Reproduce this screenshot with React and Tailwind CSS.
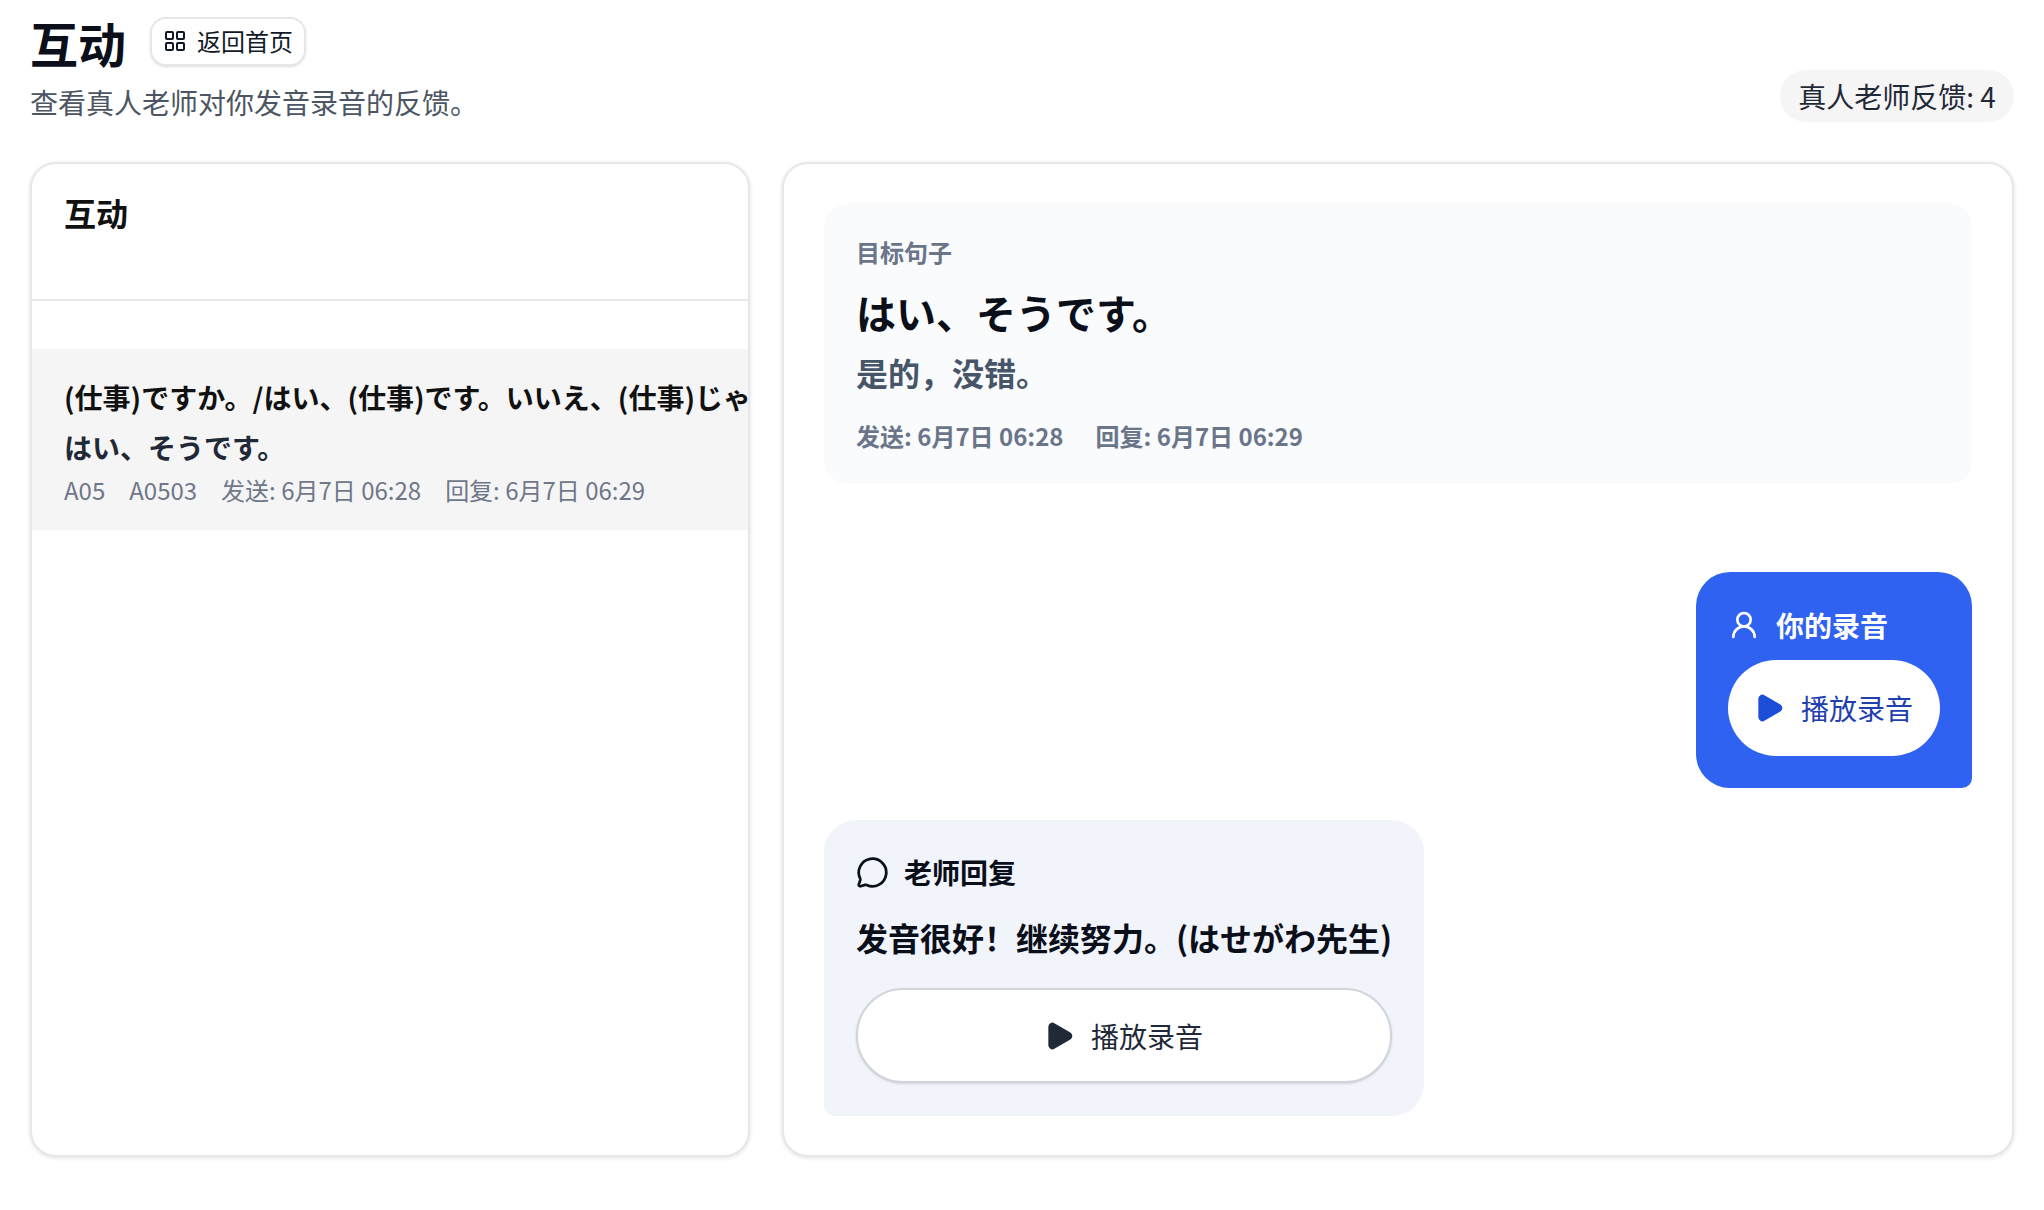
import { LayoutGrid, MessageCircle, Play, UserRound } from "lucide-react";

const fontStack = { fontFamily: '"Noto Sans CJK SC", sans-serif' };

const App = () => {
  return (
    <div
      className="w-full h-[1210px] overflow-hidden bg-white px-[30px] pt-[12px] text-[#111827]"
      style={fontStack}
    >
      <header className="flex justify-between items-end">
        <div>
          <div className="flex items-center gap-[24px] h-[60px]">
            <h1 className="text-[48px] leading-[60px] font-bold text-[#0b0f1a]">互动</h1>
            <button className="h-[49px] w-[156px] -mt-[2px] flex items-center justify-center gap-[10px] rounded-2xl border-2 border-[#e5e7eb] bg-white text-[24px] leading-none text-[#111827] shadow-sm">
              <LayoutGrid size={24} strokeWidth={2} />
              <span>返回首页</span>
            </button>
          </div>
          <p className="mt-[10px] text-[28px] leading-[40px] text-[#4b5563]">
            查看真人老师对你发音录音的反馈。
          </p>
        </div>
        <div className="h-[52px] w-[234px] flex items-center justify-center rounded-full bg-[#f5f5f5] text-[28px] leading-none text-[#1f2937]">
          真人老师反馈: 4
        </div>
      </header>

      <main className="mt-[40px] flex gap-[32px] h-[995px]">
        <section className="w-[720px] shrink-0 flex flex-col overflow-hidden rounded-[26px] border-2 border-[#e5e7eb] bg-white shadow-[0_1px_4px_rgba(0,0,0,0.12)]">
          <div className="h-[137px] shrink-0 border-b-2 border-[#e5e7eb] px-[32px] pt-[24px]">
            <h2 className="text-[32px] leading-[48px] font-bold text-[#111111]">互动</h2>
          </div>
          <div className="pt-[48px]">
            <div className="h-[181px] bg-[#f5f5f5] pl-[32px] pt-[23px] overflow-hidden">
              <p className="whitespace-nowrap text-[28px] leading-[50px] font-bold text-[#111111]">
                (仕事)ですか。/はい、(仕事)です。いいえ、(仕事)じゃ
              </p>
              <p className="text-[28px] leading-[50px] font-bold text-[#1f2937]">はい、そうです。</p>
              <div className="mt-[1px] flex gap-[24px] text-[24px] leading-[34px] text-[#6f778a]">
                <span>A05</span>
                <span>A0503</span>
                <span>发送: 6月7日 06:28</span>
                <span>回复: 6月7日 06:29</span>
              </div>
            </div>
          </div>
        </section>

        <section className="flex-1 flex flex-col rounded-[26px] border-2 border-[#e5e7eb] bg-white shadow-[0_1px_4px_rgba(0,0,0,0.12)] px-[40px] pt-[39px]">
          <div className="h-[281px] rounded-[24px] bg-[#f9fbfd] px-[32px] pt-[31px]">
            <div className="text-[24px] leading-[36px] font-semibold text-[#6b7589]">目标句子</div>
            <div className="mt-[14px] text-[40px] leading-[56px] font-bold text-[#0b0f1a]">はい、そうです。</div>
            <div className="mt-[10px] text-[32px] leading-[44px] font-semibold text-[#475569]">是的，没错。</div>
            <div className="mt-[24px] flex gap-[32px] text-[24px] leading-[36px] font-semibold text-[#6b7589]">
              <span>发送: 6月7日 06:28</span>
              <span>回复: 6月7日 06:29</span>
            </div>
          </div>

          <div className="mt-[88px] self-end w-[276px] rounded-[34px] rounded-br-[10px] bg-[#2f62f0] px-[32px] pt-[33px] pb-[32px] text-white">
            <div className="flex items-center gap-[16px] h-[40px] text-[28px] leading-[40px] font-bold">
              <UserRound size={32} strokeWidth={2} />
              <span>你的录音</span>
            </div>
            <button className="mt-[15px] h-[96px] w-[212px] flex items-center justify-center gap-[16px] rounded-full bg-white text-[28px] leading-none text-[#1e40af]">
              <Play size={32} strokeWidth={2} className="fill-[#1d4ed8] text-[#1d4ed8] -ml-[2px]" />
              <span>播放录音</span>
            </button>
          </div>

          <div className="mt-[32px] self-start w-[600px] rounded-[32px] rounded-bl-[10px] bg-[#f1f4fb] px-[32px] pt-[32px] pb-[33px]">
            <div className="flex items-center gap-[15px] h-[40px] text-[28px] leading-[40px] font-bold text-[#0b0f1a]">
              <MessageCircle size={33} strokeWidth={2} />
              <span>老师回复</span>
            </div>
            <p className="mt-[20px] whitespace-nowrap text-[32px] leading-[50px] font-bold text-[#0b0f1a]">
              发音很好！继续努力。(はせがわ先生)
            </p>
            <button className="mt-[26px] h-[95px] w-[536px] flex items-center justify-center gap-[16px] rounded-full border-2 border-[#d1d5db] bg-white text-[28px] leading-none text-[#1f2937] shadow-sm">
              <Play size={32} strokeWidth={2} className="fill-[#1f2937] text-[#1f2937] -ml-[2px]" />
              <span>播放录音</span>
            </button>
          </div>
        </section>
      </main>
    </div>
  );
};

export default App;
